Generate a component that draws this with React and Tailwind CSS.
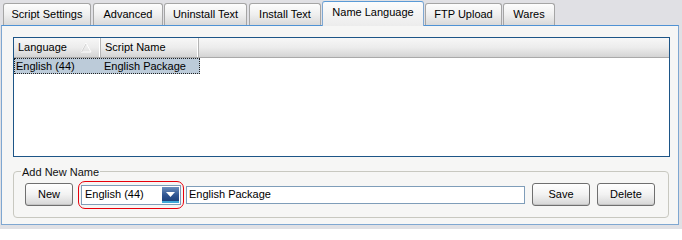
import React from 'react'

const tabs = [
  { label: 'Script Settings', w: 'w-[88px]', ml: 'ml-[3px]' },
  { label: 'Advanced', w: 'w-[70px]', ml: 'ml-[2px]' },
  { label: 'Uninstall Text', w: 'w-[83px]', ml: 'ml-[1px]' },
  { label: 'Install Text', w: 'w-[72px]', ml: 'ml-[2px]' },
  { label: 'Name Language', w: 'w-[102px]', ml: 'ml-[1px]', active: true },
  { label: 'FTP Upload', w: 'w-[77px]', ml: 'ml-[1px]' },
  { label: 'Wares', w: 'w-[52px]', ml: 'ml-[1px]' },
]

function Tab({ label, w, ml, active }) {
  if (active) {
    return (
      <div className={`${w} ${ml} relative z-10 -mb-px h-[25px] flex items-center justify-center rounded-t-[3px] border border-b-0 border-[#7fa7d1] border-t-[#5a9ad6] bg-gradient-to-b from-[#fcfcfc] to-[#ececec]`}>
        <span className="-mt-[3px]">{label}</span>
      </div>
    )
  }
  return (
    <div className={`${w} ${ml} h-[22px] flex items-center justify-center rounded-t-[3px] border border-b-0 border-[#a5a5a5] bg-gradient-to-b from-[#fdfdfd] via-[#efefef] to-[#d9d9d9]`}>
      <span>{label}</span>
    </div>
  )
}

function XpButton({ children, w }) {
  return (
    <button className={`${w} h-[23px] rounded-[3px] border border-[#6f6f6f] bg-gradient-to-b from-[#ffffff] via-[#f2f2f2] to-[#d6d6d6] text-[11px] font-normal text-black shadow-[inset_0_-1px_0_#c4c4c4]`}>
      {children}
    </button>
  )
}

function HeaderCell({ children, w, sort }) {
  return (
    <div className={`${w} h-full flex items-center justify-between pl-[4px] pr-[8px] border-r border-[#b4b4b4] shadow-[inset_-1px_0_0_#ffffff]`}>
      <span>{children}</span>
      {sort && (
        <svg width="12" height="11" viewBox="0 0 12 11">
          <path d="M6 1 L11 10 L1 10 Z" fill="none" stroke="#ffffff" strokeWidth="1" />
          <path d="M6 2 L1.5 10" stroke="#c8c8c8" strokeWidth="0.8" />
        </svg>
      )}
    </div>
  )
}

export default function App() {
  return (
    <div className="w-[682px] h-[229px] bg-[#e0e0e4] overflow-hidden text-[11px] text-black font-['Liberation_Sans',Arial,sans-serif]">
      {/* tab strip */}
      <div className="flex items-end h-[25px]">
        {tabs.map(t => <Tab key={t.label} {...t} />)}
      </div>

      {/* tab page */}
      <div className="ml-[1px] w-[678px] h-[200px] border border-[#7fa7d1] border-t-[#4f92d4] bg-[#f6f6f5] pt-[11px] pl-[11px]">
        {/* list view */}
        <div className="w-[657px] h-[120px] border border-[#1d5587] bg-white">
          <div className="h-[20px] flex bg-gradient-to-b from-[#f7f7f7] via-[#ececec] to-[#d4d4d4] border-b border-[#a9a9a9]">
            <HeaderCell w="w-[87px]" sort>Language</HeaderCell>
            <HeaderCell w="w-[98px]">Script Name</HeaderCell>
            <div className="flex-1" />
          </div>
          <div className="w-[186px] h-[16px] flex items-center bg-[#bccbd9] border border-dotted border-[#222]">
            <span className="w-[87px] pl-[1px]">English (44)</span>
            <span className="pl-[2px]">English Package</span>
          </div>
        </div>

        {/* group box */}
        <div className="relative mt-[14px] w-[656px] h-[47px] rounded-[4px] border border-[#c8c8c0] flex items-center pl-[11px]">
          <span className="absolute -top-[8px] left-[7px] px-[1px] bg-[#f6f6f5] text-[#111]">Add New Name</span>
          <XpButton w="w-[48px]">New</XpButton>
          <div className="ml-[5px] rounded-[7px] border border-[#e8000b] px-[2px] py-[3px]">
            <div className="w-[100px] h-[20px] flex items-center border border-[#7f9db9] bg-white">
              <span className="flex-1 pl-[3px]">English (44)</span>
              <div className="w-[17px] h-[16px] mr-[1px] flex items-center justify-center bg-gradient-to-b from-[#6d8fbe] via-[#2f5592] to-[#173a74] shadow-[inset_0_-2px_0_#3fa8d8]">
                <svg width="9" height="5" viewBox="0 0 9 5" className="-mt-[1px]">
                  <path d="M0 0 H9 L4.5 5 Z" fill="#ffffff" />
                </svg>
              </div>
            </div>
          </div>
          <div className="ml-[2px] w-[339px] h-[18px] flex items-center border border-[#7f9db9] bg-white pl-[2px]">
            English Package
          </div>
          <div className="ml-[7px]"><XpButton w="w-[58px]">Save</XpButton></div>
          <div className="ml-[7px]"><XpButton w="w-[58px]">Delete</XpButton></div>
        </div>
      </div>
    </div>
  )
}
